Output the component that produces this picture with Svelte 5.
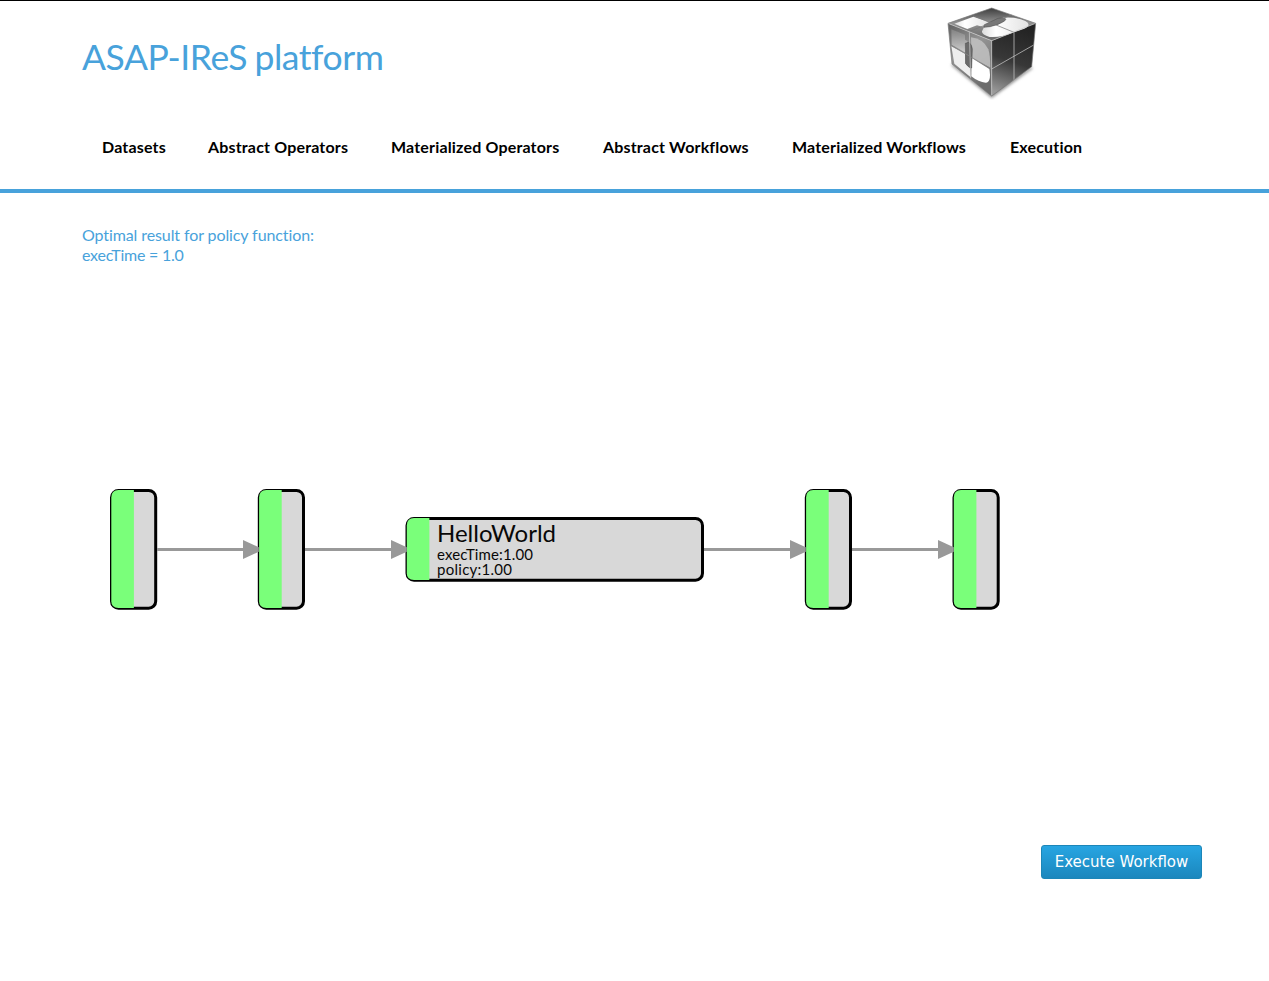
<script>
  const links = [
    { text: 'Datasets', width: 63 },
    { text: 'Abstract Operators', width: 140 },
    { text: 'Materialized Operators', width: 169 },
    { text: 'Abstract Workflows', width: 146 },
    { text: 'Materialized Workflows', width: 175 },
    { text: 'Execution', width: 72 }
  ];
  const nodes = [
    { x: 111.5, y: 490.5, w: 44.2, h: 117.7 },
    { x: 259.3, y: 490.5, w: 44.2, h: 117.7 },
    { x: 407, y: 518.5, w: 295.5, h: 61.7 },
    { x: 806.3, y: 490.5, w: 44.2, h: 117.7 },
    { x: 954, y: 490.5, w: 44.2, h: 117.7 }
  ];
  const edges = [[157, 243], [305, 391], [704, 790], [852, 938]];
</script>

<div class="page">
  <header>
    <div class="brand">
      <h1>ASAP-IReS platform</h1>
      <svg class="logo" width="104" height="104" viewBox="0 0 312 312">
        <defs>
          <linearGradient id="topFace" x1="0" y1="0" x2="0" y2="1"><stop offset="0" stop-color="#3c3c3c" /><stop offset=".45" stop-color="#929292" /><stop offset="1" stop-color="#686868" /></linearGradient>
          <linearGradient id="leftFace" x1="0" y1="0" x2=".4" y2="1"><stop offset="0" stop-color="#606060" /><stop offset=".45" stop-color="#949494" /><stop offset="1" stop-color="#6c6c6c" /></linearGradient>
          <linearGradient id="rightFace" x1=".55" y1=".05" x2=".35" y2="1"><stop offset="0" stop-color="#242424" /><stop offset=".5" stop-color="#383838" /><stop offset="1" stop-color="#999" /></linearGradient>
          <linearGradient id="whiteTop" x1="0" y1="0" x2="1" y2="0"><stop offset="0" stop-color="#ddd" /><stop offset=".3" stop-color="#fff" /><stop offset="1" stop-color="#e2e2e2" /></linearGradient>
          <linearGradient id="whiteLeft" x1="0" y1="0" x2="0" y2="1"><stop offset="0" stop-color="#888" /><stop offset="1" stop-color="#ddd" /></linearGradient>
          <filter id="soft"><feGaussianBlur stdDeviation="4" /></filter>
          <filter id="edge"><feGaussianBlur stdDeviation="1" /></filter>
        </defs>
        <path d="M36 193L155 290L276 203L155 270Z" fill="#777" stroke="#999" stroke-width="7" filter="url(#soft)" />
        <path d="M24 70L155 24L287 70L155 122Z" fill="url(#topFace)" />
        <path d="M24 70L155 122V288L36 192Z" fill="url(#leftFace)" />
        <path d="M155 122L287 70L275 200L155 288Z" fill="url(#rightFace)" />
        <g filter="url(#edge)">
          <path d="M43 71L100 50L148 67L127 80L111 76L82 87Z" fill="url(#whiteTop)" />
          <path d="M188 53Q232 50 256 63Q277 75 253 86L216 99Q184 113 149 111Q124 103 126 94L132 82L173 75L194 63Z" fill="url(#whiteTop)" />
          <path d="M133 74L174 55Q195 52 198 58Q195 67 151 80L132 82Z" fill="#777" stroke="#4b4b4b" stroke-width="1.5" />
          <path d="M34 88L75 104V119L83 124L78 132V159L35 134Z" fill="url(#whiteLeft)" opacity=".8" />
          <path d="M93 112Q130 116 145 148Q151 168 151 203L95 173Z" fill="#c2c2c2" opacity=".85" />
          <path d="M34 139L76 162V190L90 204L92 232L43 191Z" fill="#eee" />
          <path d="M95 174L148 207Q155 247 137 248Q116 247 94 229Z" fill="#fff" />
          <path d="M76 130L86 127Q96 133 97 147L95 204Q85 203 77 191Z" fill="#6b6b6b" stroke="#4a4a4a" stroke-width="1.5" />
        </g>
        <g fill="none" stroke="#c9c9c9" stroke-width="2.2">
          <path d="M222 97V241M88 94L92 235" />
          <path d="M100 47L222 97M215 45L88 94" stroke="#777" />
          <path d="M30 134L155 207" stroke="#888" />
          <path d="M155 207L281 135" />
          <path d="M24 70L155 122L287 70M155 122V286" />
        </g>
        <path d="M24 70L155 24L287 70L275 200L155 288L36 192Z" fill="none" stroke="#777" stroke-width="2" />
      </svg>
    </div>
    <nav>
      {#each links as link}
        <a href="#top" style:width="{link.width}px">{link.text}</a>
      {/each}
    </nav>
  </header>
  <main>
    <p>Optimal result for policy function:<br /><span>execTime = 1.0</span></p>
    <svg class="graph" width="1269" height="140" viewBox="0 480 1269 140">
      {#each nodes as n}
        <rect x={n.x} y={n.y} width={n.w} height={n.h} rx="7" fill="#d8d8d8" stroke="#000" stroke-width="3" />
        <path d="M{n.x + 22.4} {n.y - 0.5}H{n.x + 7}Q{n.x - 0.2} {n.y - 0.5} {n.x - 0.2} {n.y + 7}V{n.y + n.h - 7}Q{n.x - 0.2} {n.y + n.h - 0.3} {n.x + 7} {n.y + n.h - 0.3}H{n.x + 22.4}Z" fill="#7aff7a" />
      {/each}
      {#each edges as [a, b]}
        <path d="M{a} 549.5H{b + 2}" stroke="#999" stroke-width="3" />
        <path d="M{b} 540L{b + 15.8} 547.3V551.7L{b} 559Z" fill="#999" />
      {/each}
      <text x="437" y="542" font-size="24" textLength="119">HelloWorld</text>
      <text x="437" y="560" font-size="15" textLength="96">execTime:1.00</text>
      <text x="437" y="575" font-size="15" textLength="75">policy:1.00</text>
    </svg>
    <div class="actions"><button>Execute Workflow</button></div>
  </main>
</div>

<style>
  :global(body) { margin: 0; background: #fff; }
  .page { height: 981px; box-sizing: border-box; border-top: 1px solid #000; font: 16px/20px Lato, sans-serif; overflow: hidden; }
  header { height: 188px; border-bottom: 4px solid #48a2db; }
  .brand { display: flex; justify-content: space-between; height: 104px; width: 962px; padding-left: 82px; }
  h1 { margin: 36px 0 0; font-size: 35.5px; line-height: 40px; font-weight: 400; letter-spacing: -0.45px; word-spacing: -1.2px; color: #48a2db; white-space: nowrap; }
  .logo { margin-top: -1px; }
  nav { display: flex; gap: 43px; padding: 32px 0 0 102px; }
  nav a { color: #000; font-weight: 700; letter-spacing: 0.17px; text-decoration: none; white-space: nowrap; }
  p { margin: 32px 0 0 82px; color: #48a2db; height: 40px; letter-spacing: -0.1px; }
  p span { letter-spacing: -0.25px; }
  .graph { display: block; margin-top: 215px; }
  .graph text { font-family: Lato, sans-serif; fill: #080808; }
  .actions { display: flex; justify-content: flex-end; padding: 225px 67px 0 0; }
  button { width: 161px; height: 34px; padding: 0; border: 1px solid #1c86b8; border-radius: 3px; background: linear-gradient(#27a5e2, #1b87bd); color: #fff; font: 15px "DejaVu Sans", sans-serif; white-space: nowrap; }
</style>
